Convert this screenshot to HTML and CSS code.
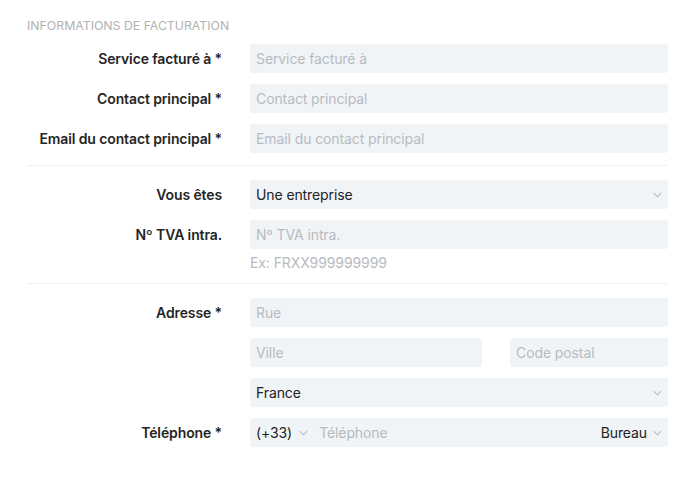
FILE: index.html
```html
<!DOCTYPE html>
<html lang="fr">
<head>
<meta charset="utf-8">
<link rel="stylesheet" href="styles.css">
</head>
<body>
<div class="form">
  <div class="heading">INFORMATIONS DE FACTURATION</div>

  <div class="row">
    <label class="label">Service facturé à *</label>
    <div class="field"><div class="input ph">Service facturé à</div></div>
  </div>
  <div class="row">
    <label class="label">Contact principal *</label>
    <div class="field"><div class="input ph">Contact principal</div></div>
  </div>
  <div class="row">
    <label class="label">Email du contact principal *</label>
    <div class="field"><div class="input ph">Email du contact principal</div></div>
  </div>

  <div class="sep"></div>

  <div class="row">
    <label class="label">Vous êtes</label>
    <div class="field"><div class="input select"><span>Une entreprise</span><svg class="chev" viewBox="0 0 10 6"><path d="M1 1l4 4 4-4"/></svg></div></div>
  </div>
  <div class="row">
    <label class="label">Nº TVA intra.</label>
    <div class="field">
      <div class="input ph">Nº TVA intra.</div>
      <div class="help">Ex: FRXX999999999</div>
    </div>
  </div>

  <div class="sep"></div>

  <div class="row">
    <label class="label">Adresse *</label>
    <div class="field stack">
      <div class="input ph">Rue</div>
      <div class="pair">
        <div class="input ph city">Ville</div>
        <div class="input ph zip">Code postal</div>
      </div>
      <div class="input select"><span>France</span><svg class="chev" viewBox="0 0 10 6"><path d="M1 1l4 4 4-4"/></svg></div>
    </div>
  </div>
  <div class="row">
    <label class="label">Téléphone *</label>
    <div class="field">
      <div class="input phone">
        <span class="code">(+33)</span><svg class="chev first" viewBox="0 0 10 6"><path d="M1 1l4 4 4-4"/></svg>
        <span class="tel ph">Téléphone</span>
        <span class="kind">Bureau</span><svg class="chev" viewBox="0 0 10 6"><path d="M1 1l4 4 4-4"/></svg>
      </div>
    </div>
  </div>
</div>
</body>
</html>
```

FILE: styles.css
```css
* { box-sizing: border-box; }
html, body { margin: 0; padding: 0; background: #fff; }
body {
  font-family: Inter, "Helvetica Neue", Arial, sans-serif;
  color: #222;
  width: 688px;
  height: 478px;
}
.form {
  padding: 18px 20px 0 27px;
  display: flex;
  flex-direction: column;
}
.heading {
  font-size: 12.3px;
  line-height: 16px;
  color: #b2b2b2;
  margin-bottom: 10px;
}
.row {
  display: grid;
  grid-template-columns: 195px 1fr;
  column-gap: 28px;
  margin-bottom: 11px;
}
.label {
  font-size: 14px;
  font-weight: 600;
  line-height: 29px;
  text-align: right;
  color: #252525;
  letter-spacing: -0.12px;
}
.field { display: flex; flex-direction: column; }
.stack { gap: 11px; }
.input {
  height: 29px;
  background: #f1f4f7;
  border-radius: 3px;
  padding: 0 6px;
  font-size: 14px;
  line-height: 29px;
  color: #222;
  letter-spacing: -0.1px;
  display: flex;
  align-items: center;
}
.ph { color: #b7bbc1; }
.select { justify-content: space-between; }
.chev {
  width: 9px;
  height: 6px;
  fill: none;
  stroke: #b3b7bd;
  stroke-width: 1.2;
  flex: none;
}
.help {
  font-size: 14px;
  line-height: 16px;
  color: #b7bbc1;
  letter-spacing: -0.1px;
  margin: 6px 0 0 0;
}
.pair { display: flex; gap: 28px; }
.city { width: 232px; }
.zip { flex: 1; }
.sep {
  height: 1px;
  background: #f0f0f0;
  margin: 1px 0 14px 0;
}
.phone .code { color: #222; }
.phone .chev.first { margin-left: 7px; }
.phone .tel { margin-left: 11px; flex: 1; }
.phone .kind { color: #222; margin-right: 6px; }
```
